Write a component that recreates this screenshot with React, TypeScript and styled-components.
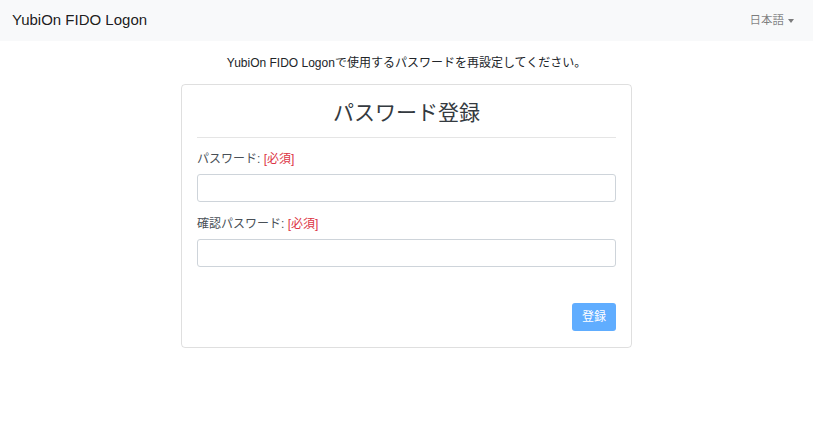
import styled, { createGlobalStyle } from 'styled-components';

const GlobalStyle = createGlobalStyle`
  body {
    margin: 0;
    background: #fff;
    color: #212529;
    font-family: "Liberation Sans", "Noto Sans CJK JP", sans-serif;
    font-size: 12px;
    line-height: 1.5;
  }
  * { box-sizing: border-box; }
`;

const Navbar = styled.nav`
  height: 41px;
  background: #f8f9fa;
  display: flex;
  align-items: center;
  justify-content: space-between;
  padding: 0 19px 0 12px;
`;

const Brand = styled.span`
  font-size: 15px;
  color: rgba(0, 0, 0, 0.9);
`;

const LangToggle = styled.span`
  display: flex;
  align-items: center;
  gap: 4px;
  font-size: 11.5px;
  color: rgba(0, 0, 0, 0.5);
`;

const Caret = styled.span`
  width: 0;
  height: 0;
  border-left: 3.5px solid transparent;
  border-right: 3.5px solid transparent;
  border-top: 4px solid rgba(0, 0, 0, 0.5);
`;

const Main = styled.main`
  display: flex;
  flex-direction: column;
  align-items: center;
  padding-top: 13px;
`;

const Lead = styled.p`
  margin: 0 0 12px;
  text-align: center;
  line-height: 18px;
`;

const Card = styled.div`
  width: 451px;
  border: 1px solid rgba(0, 0, 0, 0.125);
  border-radius: 4px;
  padding: 15px 15px 16px;
  display: flex;
  flex-direction: column;
`;

const Title = styled.h2`
  margin: 0;
  font-size: 21px;
  font-weight: 400;
  line-height: 25px;
  text-align: center;
  color: #343a40;
`;

const Rule = styled.hr`
  margin: 12px 0;
  border: 0;
  border-top: 1px solid rgba(0, 0, 0, 0.1);
`;

const Group = styled.div<{ $last?: boolean }>`
  display: flex;
  flex-direction: column;
  gap: 6px;
  margin-bottom: ${({ $last }) => ($last ? '36px' : '13px')};
`;

const Label = styled.label`
  line-height: 18px;
  color: #495057;
`;

const Required = styled.span`
  color: #dc3545;
`;

const Input = styled.input`
  height: 28px;
  border: 1px solid #ced4da;
  border-radius: 3px;
  padding: 4px 8px;
  font: inherit;
  outline: none;
`;

const Actions = styled.div`
  display: flex;
  justify-content: flex-end;
`;

const Button = styled.button`
  height: 28px;
  padding: 0 10px;
  border: none;
  border-radius: 3px;
  background: #007bff;
  opacity: 0.62;
  color: #fff;
  font: inherit;
  font-size: 12px;
  cursor: default;
`;

export default function App() {
  return (
    <>
      <GlobalStyle />
      <Navbar>
        <Brand>YubiOn FIDO Logon</Brand>
        <LangToggle>
          日本語
          <Caret />
        </LangToggle>
      </Navbar>
      <Main>
        <Lead>YubiOn FIDO Logonで使用するパスワードを再設定してください。</Lead>
        <Card>
          <Title>パスワード登録</Title>
          <Rule />
          <Group>
            <Label>
              パスワード: <Required>[必須]</Required>
            </Label>
            <Input type="password" />
          </Group>
          <Group $last>
            <Label>
              確認パスワード: <Required>[必須]</Required>
            </Label>
            <Input type="password" />
          </Group>
          <Actions>
            <Button disabled>登録</Button>
          </Actions>
        </Card>
      </Main>
    </>
  );
}
